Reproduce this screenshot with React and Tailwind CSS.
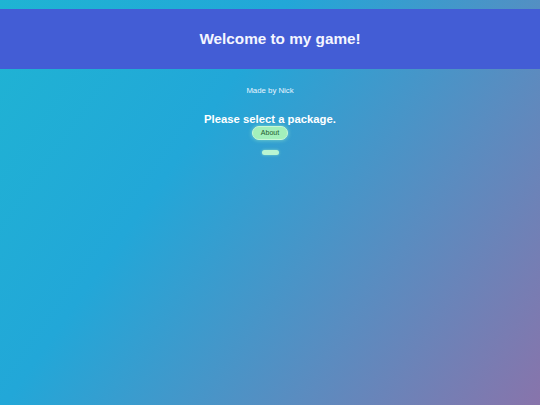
import React from 'react';

const App = () => {
  return (
    <div
      className="min-h-[405px] w-full pt-[9px] bg-[linear-gradient(125deg,#1fb4d3_0%,#22a7d8_35%,#5a8cc0_70%,#8874ab_100%)]"
      style={{ fontFamily: '"Liberation Sans", Arial, sans-serif' }}
    >
      <header className="h-[60px] bg-[#435dd5] flex items-center justify-center pl-[20px]">
        <h1 className="text-[15.3px] font-bold text-[#f4f6ff]">Welcome to my game!</h1>
      </header>
      <div className="flex flex-col items-center text-white">
        <p className="mt-[17px] text-[7.8px] leading-[9px] text-[#e8f4ff]">Made by Nick</p>
        <h2 className="mt-[17px] text-[11.3px] leading-[14px] font-bold">Please select a package.</h2>
        <button className="h-[14px] px-[8px] rounded-full bg-[#a3f0bb] border border-[#c8f8d6] text-[7px] text-[#1f5a2e] shadow-[0_0_4px_rgba(180,255,200,0.6)]">
          About
        </button>
        <button className="mt-[10px] w-[17px] h-[5px] rounded-full bg-[#b9f5d2] shadow-[0_0_3px_rgba(180,255,200,0.6)]" />
      </div>
    </div>
  );
};

export default App;
